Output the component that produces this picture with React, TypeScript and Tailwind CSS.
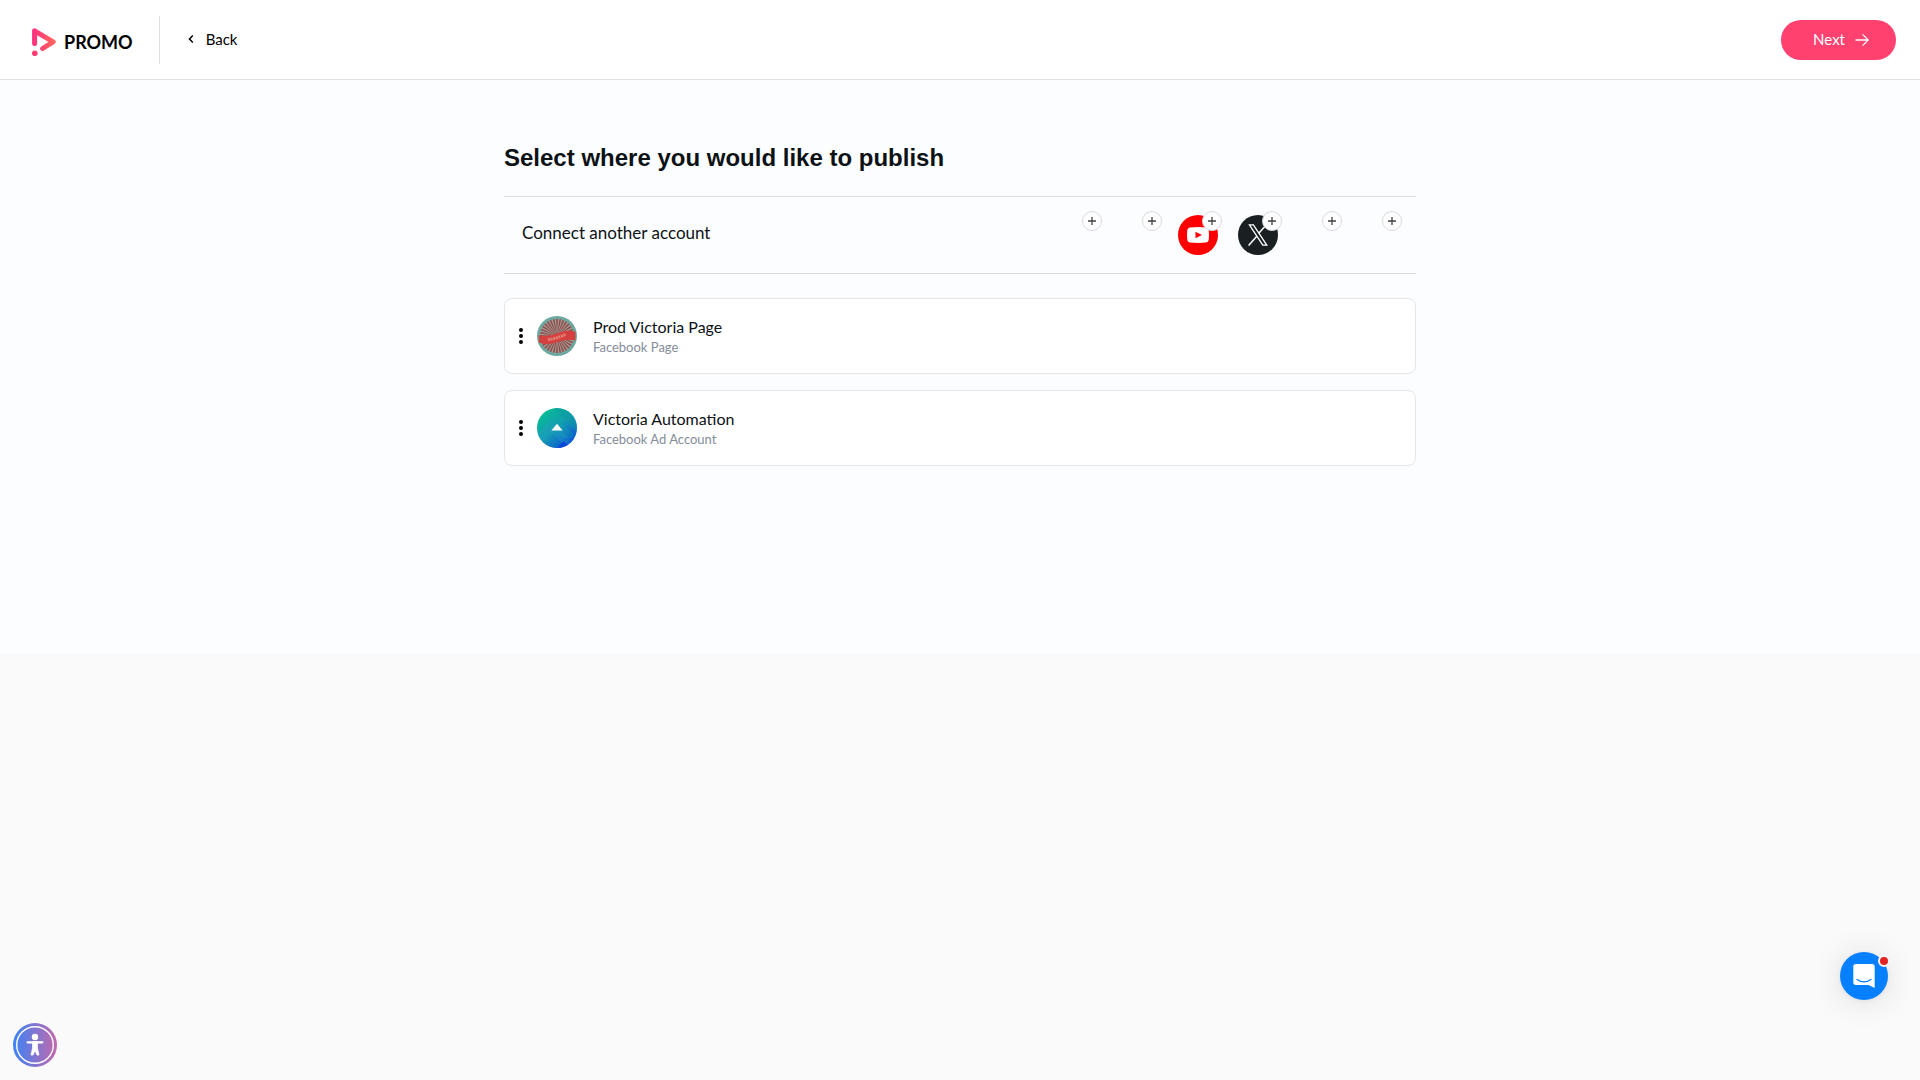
import React from 'react';

function PromoMark() {
  return (
    <svg width="24" height="28" viewBox="0 0 24 28" fill="none" aria-hidden="true">
      <defs>
        <linearGradient id="promo" x1="0" y1="0" x2="24" y2="0" gradientUnits="userSpaceOnUse">
          <stop stopColor="#ff2e7e" />
          <stop offset="1" stopColor="#ff6a5a" />
        </linearGradient>
      </defs>
      <path d="M2.6 15.4V2.8L21.2 13.8L10.6 20.5" stroke="url(#promo)" strokeWidth="5" strokeLinecap="round" strokeLinejoin="round" />
      <circle cx="2.8" cy="25.2" r="2.8" fill="#ff3d71" />
    </svg>
  );
}

function YouTubeIcon() {
  return (
    <svg width="40" height="40" viewBox="0 0 40 40" aria-hidden="true">
      <circle cx="20" cy="20" r="20" fill="#ff0000" />
      <path d="M12 12.4Q20 11.6 28 12.4Q30.4 12.6 30.7 15Q31.3 20 30.7 25Q30.4 27.4 28 27.6Q20 28.4 12 27.6Q9.6 27.4 9.3 25Q8.7 20 9.3 15Q9.6 12.6 12 12.4Z" fill="#fff" />
      <path d="M17.5 16.8L24 20L17.5 23.2Z" fill="#ff0000" />
    </svg>
  );
}

function XIcon() {
  return (
    <svg width="40" height="40" viewBox="0 0 40 40" fill="none" stroke="#fff" aria-hidden="true">
      <circle cx="20" cy="20" r="20" fill="#1a1f22" stroke="none" />
      <path d="M28.6 9.4L20.8 18.2M18.6 21.6L10.6 30.6" strokeWidth="1.5" />
      <path d="M11.4 9.8H15.4L28.8 30.2H24.8Z" strokeWidth="1.3" />
    </svg>
  );
}

const rays = Array.from({ length: 32 }, (_, i) => i * 11.25);

function PageAvatar() {
  return (
    <svg width="40" height="40" viewBox="0 0 40 40" aria-hidden="true">
      <circle cx="20" cy="20" r="20" fill="#6ba8a0" />
      <circle cx="20" cy="20" r="17" fill="#a89c90" />
      {rays.map((angle) => (
        <path key={angle} d="M20 20L19.1 3H20.9Z" fill="#8a4a4c" transform={`rotate(${angle} 20 20)`} />
      ))}
      <path d="M1.8 19Q10 21.5 20 17.5Q29 13.2 38.4 15.5V24.4Q30 22.6 21 26Q10 29.6 1.8 26.4Z" fill="#d63f3f" />
      <path d="M11 23.6Q20 22.6 29 18.2" stroke="#e08076" strokeWidth="3" strokeDasharray="2 0.7" fill="none" />
    </svg>
  );
}

function AdAvatar() {
  return (
    <svg width="40" height="40" viewBox="0 0 40 40" aria-hidden="true">
      <defs>
        <linearGradient id="ad" x1="6" y1="4" x2="34" y2="36" gradientUnits="userSpaceOnUse">
          <stop stopColor="#06bd93" />
          <stop offset="0.5" stopColor="#139bb2" />
          <stop offset="1" stopColor="#0a4fd8" />
        </linearGradient>
        <clipPath id="adClip"><circle cx="20" cy="20" r="20" /></clipPath>
      </defs>
      <g clipPath="url(#adClip)">
        <rect width="40" height="40" fill="url(#ad)" />
        <path d="M16 0H40V24Z" fill="#0b9c9c" fillOpacity=".45" />
        <path d="M0 26L14 12L40 38V40H30L14 24L4 34Z" fill="#2aa0cf" fillOpacity=".3" />
        <path d="M6 12L14 4L38 28L30 34Z" fill="#10a8a8" fillOpacity=".25" />
        <path d="M20 40L27 33L34 40Z" fill="#0b3fe0" fillOpacity=".8" />
        <path d="M26 30H40V40Z" fill="#0b50dc" fillOpacity=".35" />
      </g>
      <path d="M14.4 22.4L20 15.8L25.6 22.4Z" fill="#fff" />
    </svg>
  );
}

const networks: { name: string; icon: React.ReactNode }[] = [
  { name: 'Facebook', icon: null },
  { name: 'Instagram', icon: null },
  { name: 'YouTube', icon: <YouTubeIcon /> },
  { name: 'X', icon: <XIcon /> },
  { name: 'LinkedIn', icon: null },
  { name: 'TikTok', icon: null },
];

const accounts = [
  { name: 'Prod Victoria Page', kind: 'Facebook Page', avatar: <PageAvatar /> },
  { name: 'Victoria Automation', kind: 'Facebook Ad Account', avatar: <AdAvatar /> },
];

export default function App() {
  return (
    <div className="min-h-screen bg-[#fafafa] font-['Lato',sans-serif] text-[#0d1216]">
      <header className="flex h-20 items-center border-b border-[#e1e2e4] bg-white pr-6 pl-8">
        <a href="#home" className="mt-1 flex items-center gap-2" aria-label="Promo home">
          <PromoMark />
          <span className="text-lg leading-6 font-bold text-black">PROMO</span>
        </a>
        <div className="ml-[26px] h-12 w-px bg-[#dfe0e2]" />
        <button className="mb-0.5 ml-7 flex items-center gap-3 text-[15px] leading-6 text-black">
          <svg width="6" height="10" viewBox="0 0 6 10" fill="none" stroke="currentColor" strokeWidth="1.5" aria-hidden="true">
            <path d="M4.8 1.6L1.5 5L4.8 8.4" />
          </svg>
          Back
        </button>
        <button className="ml-auto flex h-10 items-center gap-2.5 rounded-full bg-[#ff416f] pr-[27px] pl-8 text-[15px] text-white">
          Next
          <svg width="14" height="14" viewBox="0 0 14 14" fill="none" stroke="currentColor" strokeWidth="1.3" aria-hidden="true">
            <path d="M.5 7H13M7.6 1.4L13.2 7L7.6 12.6" />
          </svg>
        </button>
      </header>

      <main className="bg-[#fcfdff] px-6 pt-15 pb-[187px]">
        <div className="mx-auto max-w-[912px]">
          <h1 className="font-['Liberation_Sans',sans-serif] text-2xl leading-9 font-bold">Select where you would like to publish</h1>
          <section className="mt-5 flex h-[78px] items-center justify-between border-y border-[#d9dbe0] px-[18px]">
            <h2 className="mb-1 text-[17px] leading-6">Connect another account</h2>
            <div className="flex gap-5">
              {networks.map((n) => (
                <button key={n.name} aria-label={'Connect ' + n.name} className="relative size-10">
                  {n.icon}
                  <span className="absolute -top-1 -right-1 flex size-5 items-center justify-center rounded-full border border-[#d9dbe3] bg-white">
                    <svg width="8" height="8" viewBox="0 0 8 8" stroke="#3f4143" strokeWidth="1.3" aria-hidden="true">
                      <path d="M4 0V8M0 4H8" />
                    </svg>
                  </span>
                </button>
              ))}
            </div>
          </section>
          <ul className="mt-6 flex flex-col gap-4">
            {accounts.map((a) => (
              <li key={a.name} className="flex h-19 items-center rounded-lg border border-[#e4e6e9] bg-white pl-3.5">
                <button aria-label={'Options for ' + a.name}>
                  <svg width="4" height="16" viewBox="0 0 4 16" aria-hidden="true">
                    <circle cx="2" cy="2" r="2" />
                    <circle cx="2" cy="8" r="2" />
                    <circle cx="2" cy="14" r="2" />
                  </svg>
                </button>
                <div className="ml-3.5">{a.avatar}</div>
                <div className="mt-0.5 ml-4">
                  <p className="text-base leading-5">{a.name}</p>
                  <p className="text-[13px] leading-5 text-[#858c9a]">{a.kind}</p>
                </div>
              </li>
            ))}
          </ul>
        </div>
      </main>

      <button aria-label="Accessibility menu" className="fixed bottom-[13px] left-[13px]">
        <svg width="44" height="44" viewBox="0 0 44 44" aria-hidden="true">
          <defs>
            <linearGradient id="a11y" x1="0" y1="0" x2="1" y2="0">
              <stop stopColor="#3d83f5" />
              <stop offset="1" stopColor="#c368ac" />
            </linearGradient>
          </defs>
          <circle cx="22" cy="22" r="22" fill="url(#a11y)" />
          <circle cx="22" cy="22" r="18.3" fill="none" stroke="#fff" strokeWidth="1.4" />
          <circle cx="22" cy="14" r="3.2" fill="#fff" />
          <path d="M14.6 19.3H29.4" stroke="#fff" strokeWidth="2.2" strokeLinecap="round" />
          <path d="M19.6 18.5H24.4V25L26 32H24L22 27.4L20 32H18L19.6 25Z" fill="#fff" stroke="#fff" strokeWidth="0.8" strokeLinejoin="round" />
        </svg>
      </button>

      <button aria-label="Open chat" className="fixed right-8 bottom-20 size-12 rounded-full bg-[#0680ff] shadow-[0_1px_6px_rgba(0,0,0,0.06),0_2px_32px_rgba(0,0,0,0.12)]">
        <svg width="48" height="48" viewBox="0 0 48 48" aria-hidden="true">
          <path d="M16 12H32Q34.7 12 34.7 14.7V36L28.6 33H16Q13.3 33 13.3 30.3V14.7Q13.3 12 16 12Z" fill="#fff" />
          <path d="M17 27.4Q24 32.4 31 27.4" stroke="#0680ff" strokeWidth="1.2" strokeLinecap="round" fill="none" />
        </svg>
        <span className="absolute top-[3px] -right-0.5 box-content size-2 rounded-full border-2 border-[#f4f4f4] bg-[#e02424]" />
      </button>
    </div>
  );
}
